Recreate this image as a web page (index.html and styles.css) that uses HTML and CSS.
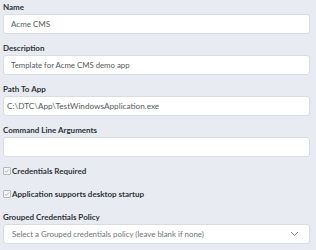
FILE: index.html
```html
<!DOCTYPE html>
<html lang="en">
<head>
    <meta charset="UTF-8">
    <title>Application</title>
    <link rel="stylesheet" href="styles.css">
</head>
<body>
    <form class="app-form">
        <div class="field">
            <label>Name</label>
            <input type="text" value="Acme CMS">
        </div>
        <div class="field">
            <label>Description</label>
            <input type="text" class="desc" value="Template for Acme CMS demo app">
        </div>
        <div class="field">
            <label>Path To App</label>
            <input type="text" class="path" value="C:\DTC\App\TestWindowsApplication.exe">
        </div>
        <div class="field">
            <label>Command Line Arguments</label>
            <input type="text" value="">
        </div>
        <div class="check">
            <span class="box"><svg width="8" height="8" viewBox="0 0 8 8"><path d="M1.5 4.2 L3.2 5.8 L6.6 2" fill="none" stroke="#9a9ea4" stroke-width="1"/></svg></span>
            <span>Credentials Required</span>
        </div>
        <div class="check">
            <span class="box"><svg width="8" height="8" viewBox="0 0 8 8"><path d="M1.5 4.2 L3.2 5.8 L6.6 2" fill="none" stroke="#9a9ea4" stroke-width="1"/></svg></span>
            <span>Application supports desktop startup</span>
        </div>
        <div class="field">
            <label>Grouped Credentials Policy</label>
            <div class="select">
                <span>Select a Grouped credentials policy (leave blank if none)</span>
                <svg width="9" height="6" viewBox="0 0 9 6"><path d="M1 1 L4.5 4.5 L8 1" fill="none" stroke="#8a8e94" stroke-width="1"/></svg>
            </div>
        </div>
    </form>
</body>
</html>
```

FILE: styles.css
```css
* {
    box-sizing: border-box;
    font-family: 'Lato', sans-serif;
}
body {
    margin: 0;
    background-color: #e8ecf2;
    color: #2f3338;
}
.app-form {
    padding: 0 6px 0 3px;
}
.field {
    margin-bottom: 7px;
}
.field label {
    display: block;
    font-size: 8px;
    font-weight: bold;
    line-height: 14px;
}
.field input,
.select {
    display: block;
    width: 100%;
    height: 20px;
    margin: 0;
    padding: 0 7px;
    border: 1px solid #d9dce0;
    border-radius: 3px;
    background: #fff;
    font-size: 8px;
    color: #555a60;
    outline: none;
}
.field input.desc {
    font-size: 7.8px;
}
.field input.path {
    padding-left: 3px;
    font-size: 8.2px;
}
.select {
    display: flex;
    align-items: center;
    justify-content: space-between;
    color: #70747a;
    padding-left: 8px;
    padding-right: 10px;
    font-size: 7.9px;
}
.check {
    display: flex;
    align-items: center;
    gap: 1px;
    height: 14px;
    margin-bottom: 9px;
    font-size: 8px;
    font-weight: bold;
}
.box {
    display: flex;
    align-items: center;
    justify-content: center;
    width: 8px;
    height: 8px;
    border: 1px solid #b5b9be;
    border-radius: 1px;
    background: #f4f5f7;
}
```
